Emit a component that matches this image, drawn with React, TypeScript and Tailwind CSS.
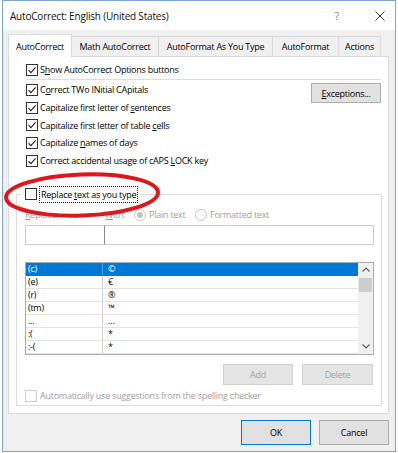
import React from "react";

const Check = ({ checked = false, disabled = false }: { checked?: boolean; disabled?: boolean }) => (
  <span
    className={
      disabled
        ? "w-[12px] h-[12px] border border-[#cfcfcf] bg-white flex items-center justify-center shrink-0"
        : "w-[12px] h-[12px] border border-[#333333] bg-white flex items-center justify-center shrink-0"
    }
  >
    {checked && (
      <svg width="10" height="10" viewBox="0 0 10 10">
        <path d="M1.5 5.2 L3.9 7.6 L8.6 2.4" stroke="#1f1f1f" strokeWidth="1.1" fill="none" />
      </svg>
    )}
  </span>
);

const Radio = ({ checked = false }: { checked?: boolean }) => (
  <span className="w-[12px] h-[12px] rounded-full border border-[#c4c4c4] bg-white flex items-center justify-center shrink-0">
    {checked && <span className="w-[6px] h-[6px] rounded-full bg-[#c4c4c4]" />}
  </span>
);

const Row = ({ children }: { children: React.ReactNode }) => (
  <div className="h-[17.7px] flex items-center pl-[17px] gap-[2px]">
    <Check checked />
    <span className="whitespace-nowrap">{children}</span>
  </div>
);

const rows: [string, string][] = [
  ["(c)", "©"],
  ["(e)", "€"],
  ["(r)", "®"],
  ["(tm)", "™"],
  ["...", "…"],
  [":(", "*"],
  [":-(", "*"],
];

export default function App() {
  return (
    <div className="w-[398px] h-[453px] bg-white relative font-['Open_Sans','Noto_Sans',sans-serif] text-[9px] tracking-[-0.25px] text-black leading-none">
      <div className="ml-[2px] w-[394px] h-[452px] border border-[#7ba4d2] bg-[#f0f0f0] flex flex-col">
        {/* Title bar */}
        <div className="h-[29px] bg-white flex items-center pl-[7px] shrink-0">
          <span className="text-[10px] tracking-[-0.2px] text-[#111]">AutoCorrect: English (United States)</span>
          <span className="ml-auto mr-[36px] text-[11px] text-[#444] font-light">?</span>
          <svg width="10" height="10" viewBox="0 0 10 10" className="mr-[10px]">
            <path d="M0.5 0.5 L9.5 9.5 M9.5 0.5 L0.5 9.5" stroke="#333" strokeWidth="1" />
          </svg>
        </div>

        {/* Tabs */}
        <div className="flex items-end h-[26px] pl-[5px] shrink-0">
          <div className="h-[23px] w-[64px] bg-white border border-b-0 border-[#d9d9d9] relative z-10 -mb-px flex items-center justify-center">
            AutoCorrect
          </div>
          <div className="h-[20px] w-[87px] border-t border-r border-[#d9d9d9] flex items-center justify-center">
            Math AutoCorrect
          </div>
          <div className="h-[20px] w-[114px] border-t border-r border-[#d9d9d9] flex items-center justify-center">
            AutoFormat As You Type
          </div>
          <div className="h-[20px] w-[66px] border-t border-r border-[#d9d9d9] flex items-center justify-center">
            AutoFormat
          </div>
          <div className="h-[20px] w-[42px] border-t border-r border-[#d9d9d9] flex items-center justify-center">
            Actions
          </div>
        </div>

        {/* Panel */}
        <div className="ml-[5px] w-[381px] h-[358px] border border-[#d9d9d9] bg-white flex flex-col shrink-0">
          <div className="pt-[4px]">
            <div className="h-[17px] flex items-center pl-[17px] gap-[2px]">
              <Check checked />
              <span>
                S<u>h</u>ow AutoCorrect Options buttons
              </span>
            </div>
          </div>
          <div className="mt-[1px] ml-[17px] mr-[7px] h-px bg-[#dcdcdc]" />
          <div className="mt-[1px] flex">
            <div className="flex-1 flex flex-col">
              <Row>
                C<u>o</u>rrect TWo INitial CApitals
              </Row>
              <Row>
                Capitalize first letter of <u>s</u>entences
              </Row>
              <Row>
                Capitalize first letter of table <u>c</u>ells
              </Row>
              <Row>
                Capitalize <u>n</u>ames of days
              </Row>
              <Row>
                Correct accidental usage of cAPS <u>L</u>OCK key
              </Row>
            </div>
            <div className="mr-[7px] mt-[2px]">
              <div className="w-[70px] h-[20px] bg-[#e1e1e1] border border-[#adadad] flex items-center justify-center">
                <span>
                  <u>E</u>xceptions...
                </span>
              </div>
            </div>
          </div>

          {/* Group box */}
          <div className="mt-[24.5px] ml-[7px] w-[366px] h-[212px] border border-[#dcdcdc] flex flex-col">
            <div className="-mt-[9px] h-[17px] flex">
              <div className="ml-[4px] pl-[4px] pr-[2px] bg-white flex items-center gap-[2px]">
                <Check />
                <span className="h-[17px] border border-dotted border-[#222] px-[1px] flex items-center">
                  <span>
                    Replace <u>t</u>ext as you type
                  </span>
                </span>
              </div>
            </div>

            <div className="mt-[5px] h-[14px] flex items-center text-[#a0a0a0]">
              <span className="pl-[8px] w-[88px]">
                <u>R</u>eplace:
              </span>
              <span className="w-[29px]">
                <u>W</u>ith:
              </span>
              <Radio checked />
              <span className="ml-[3px] w-[46px]">Plain text</span>
              <Radio />
              <span className="ml-[3px]">Formatted text</span>
            </div>

            <div className="mt-[3px] ml-[8px] flex h-[20px]">
              <div className="w-[80px] h-[20px] border border-[#cccccc] border-r-[#8a8a8a] bg-white" />
              <div className="w-[269px] h-[20px] border border-l-0 border-[#cccccc] bg-white" />
            </div>

            {/* List */}
            <div className="mt-[17px] ml-[8px] w-[349px] h-[93px] border border-[#adadad] flex">
              <div className="flex-1 flex flex-col">
                {rows.map(([a, b], i) => (
                  <div
                    key={i}
                    className={
                      i === 0
                        ? "h-[13px] flex bg-[#0078d7] text-white border-b border-[#0078d7]"
                        : "h-[13px] flex border-b border-[#e3e3e3]"
                    }
                  >
                    <div
                      className={
                        i === 0
                          ? "w-[77px] pl-[2px] border-r border-[#4d9de0] flex items-center"
                          : "w-[77px] pl-[2px] border-r border-[#cfcfcf] flex items-center"
                      }
                    >
                      {a}
                    </div>
                    <div className="flex-1 pl-[5px] flex items-center">{b}</div>
                  </div>
                ))}
              </div>
              <div className="w-[15px] bg-[#f0f0f0] flex flex-col items-center">
                <div className="h-[14px] flex items-center justify-center">
                  <svg width="8" height="5" viewBox="0 0 8 5">
                    <path d="M0.5 4.5 L4 1 L7.5 4.5" stroke="#606060" strokeWidth="1.2" fill="none" />
                  </svg>
                </div>
                <div className="mt-[1px] w-[13px] h-[14px] bg-[#cdcdcd]" />
                <div className="mt-auto h-[14px] flex items-center justify-center">
                  <svg width="8" height="5" viewBox="0 0 8 5">
                    <path d="M0.5 0.5 L4 4 L7.5 0.5" stroke="#606060" strokeWidth="1.2" fill="none" />
                  </svg>
                </div>
              </div>
            </div>

            <div className="mt-[9px] flex justify-end gap-[9px] pr-[8px]">
              <div className="w-[70px] h-[21px] bg-[#e5e5e5] border border-[#d0d0d0] text-[#a3a3a3] flex items-center justify-center">
                Add
              </div>
              <div className="w-[71px] h-[21px] bg-[#e5e5e5] border border-[#d0d0d0] text-[#a3a3a3] flex items-center justify-center">
                Delete
              </div>
            </div>

            <div className="mt-[4px] h-[14px] pl-[8px] flex items-center gap-[3px] text-[#a0a0a0]">
              <Check disabled />
              <span>Automatically use suggestions from the spelling checker</span>
            </div>
          </div>
        </div>

        {/* Bottom buttons */}
        <div className="mt-[6px] flex justify-end gap-[8px] pr-[6px]">
          <div className="w-[70px] h-[25px] bg-[#e1e1e1] border border-[#0078d7] flex items-center justify-center">
            OK
          </div>
          <div className="w-[70px] h-[25px] bg-[#e1e1e1] border border-[#adadad] flex items-center justify-center">
            Cancel
          </div>
        </div>
      </div>

      {/* Red annotation ellipse */}
      <svg className="absolute left-0 top-0 pointer-events-none" width="398" height="453" viewBox="0 0 398 453">
        <ellipse cx="82" cy="195" rx="76" ry="20.5" fill="none" stroke="#e0161d" strokeWidth="4" transform="rotate(-2 82 195)" />
      </svg>
    </div>
  );
}
